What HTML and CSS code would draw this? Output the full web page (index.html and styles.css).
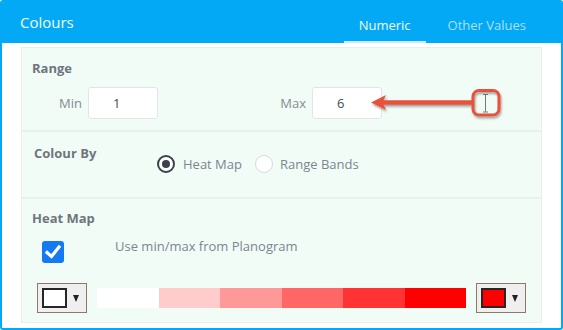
FILE: index.html
```html
<!DOCTYPE html>
<html lang="en">
<head>
    <meta charset="UTF-8">
    <meta name="viewport" content="width=device-width, initial-scale=1.0">
    <title>Colours</title>
    <link rel="stylesheet" href="styles.css">
</head>
<body>

<div class="window">
    <header class="window-head">
        <h1 class="title">Colours</h1>
        <nav class="tabs">
            <span class="tab active">Numeric</span>
            <span class="tab">Other Values</span>
        </nav>
    </header>

    <div class="window-body">
        <div class="panel">
            <section class="group range">
                <h2 class="group-title">Range</h2>
                <div class="range-row">
                    <label class="field">
                        <span class="field-label">Min</span>
                        <input class="field-input" type="text" value="1">
                    </label>
                    <label class="field">
                        <span class="field-label">Max</span>
                        <input class="field-input" type="text" value="6">
                    </label>
                </div>
            </section>

            <section class="group colour-by">
                <h2 class="group-title">Colour By</h2>
                <div class="radios">
                    <span class="radio checked"></span>
                    <span class="radio-text">Heat Map</span>
                    <span class="radio"></span>
                    <span class="radio-text">Range Bands</span>
                </div>
            </section>

            <section class="group heat-map">
                <h2 class="group-title">Heat Map</h2>
                <div class="check-row">
                    <span class="checkbox">
                        <svg width="22" height="22" viewBox="0 0 22 22">
                            <polyline points="5,11.5 9.5,15.5 17,6" fill="none" stroke="#fff" stroke-width="3.2" stroke-linecap="square"/>
                        </svg>
                    </span>
                    <span class="check-text">Use min/max from Planogram</span>
                </div>
                <div class="scale-row">
                    <div class="picker">
                        <span class="swatch" style="background: #ffffff"></span>
                        <span class="caret"></span>
                    </div>
                    <div class="scale">
                        <span style="background: #ffffff"></span>
                        <span style="background: #ffcccc"></span>
                        <span style="background: #ff9999"></span>
                        <span style="background: #ff6666"></span>
                        <span style="background: #ff3333"></span>
                        <span style="background: #ff0000"></span>
                    </div>
                    <div class="picker">
                        <span class="swatch" style="background: #ff0000"></span>
                        <span class="caret"></span>
                    </div>
                </div>
            </section>
        </div>
    </div>

    <!-- annotation pointing at the Max field -->
    <svg class="callout" width="142" height="40" viewBox="0 0 142 40">
        <defs>
            <filter id="shadow" x="-10%" y="-30%" width="130%" height="180%">
                <feDropShadow dx="1" dy="2" stdDeviation="1.2" flood-color="#000" flood-opacity="0.35"/>
            </filter>
        </defs>
        <g filter="url(#shadow)">
            <path d="M8,18.5 L23,11 L20.5,16.3 L109,16.3 L109,20.7 L20.5,20.7 L23,26 Z" fill="#e8513b"/>
            <rect x="110" y="6.5" width="26" height="24.5" rx="6" fill="none" stroke="#e8513b" stroke-width="3"/>
        </g>
        <g stroke="#777" stroke-width="1" fill="none">
            <line x1="122.5" y1="11" x2="122.5" y2="27.5"/>
            <line x1="120" y1="10.5" x2="125" y2="10.5"/>
            <line x1="120" y1="28" x2="125" y2="28"/>
        </g>
    </svg>
</div>

</body>
</html>
```

FILE: styles.css
```css
body {
    margin: 0;
    font-family: "Open Sans", "Noto Sans", sans-serif;
    background-color: #fff;
}
.window {
    position: relative;
    width: 563px;
    height: 330px;
    box-sizing: border-box;
    border: 2px solid #03a9f4;
    border-radius: 3px;
    overflow: hidden;
    background: #fff;
}
.window-head {
    display: flex;
    justify-content: space-between;
    height: 41px;
    background-color: #03a9f4;
}
.title {
    margin: 0;
    padding-left: 18px;
    font-size: 15px;
    font-weight: 400;
    line-height: 41px;
    color: #f2faff;
}
.tabs {
    display: flex;
    gap: 7px;
    padding-right: 20px;
}
.tab {
    display: flex;
    align-items: center;
    padding: 6px 15px 0;
    font-size: 13px;
    color: #a9e1fb;
    border-bottom: 2px solid transparent;
}
.tab.active {
    color: #eef9ff;
    border-bottom-color: #c6ecfd;
}
.window-body {
    padding: 4px 19px 5px;
}
.panel {
    border: 1px solid #e8f0eb;
    background-color: #f2fcf7;
}
.group {
    border-bottom: 2px solid #ebf0ed;
}
.group:last-child {
    border-bottom: none;
}
.group-title {
    margin: 0;
    font-size: 13px;
    font-weight: 700;
    line-height: 18px;
    color: #6e757d;
}
.range {
    padding: 11px 10px 11px;
}
.range-row {
    display: flex;
    gap: 98px;
    margin-top: 10px;
}
.field {
    display: flex;
    align-items: center;
    gap: 6px;
}
.field-label {
    width: 50px;
    text-align: right;
    font-size: 13px;
    color: #858b92;
}
.field-input {
    width: 70px;
    height: 32px;
    box-sizing: border-box;
    padding: 0 0 0 24px;
    border: 1px solid #e3e6e8;
    border-radius: 3px;
    font-family: inherit;
    font-size: 13px;
    color: #454a50;
    background: #fff;
    outline: none;
}
.colour-by {
    display: flex;
    align-items: flex-start;
    padding: 12px 10px 24px 12px;
}
.colour-by .group-title {
    width: 123px;
}
.radios {
    display: flex;
    align-items: center;
    margin-top: 11px;
    height: 18px;
}
.radio {
    position: relative;
    width: 18px;
    height: 18px;
    box-sizing: border-box;
    border: 1px solid #d6dadd;
    border-radius: 50%;
    background: #fff;
}
.radio.checked {
    border: 2.5px solid #3a414b;
}
.radio.checked::after {
    content: "";
    position: absolute;
    left: 2.5px;
    top: 2.5px;
    width: 8px;
    height: 8px;
    border-radius: 50%;
    background: #3a414b;
}
.radio-text {
    margin: 0 13px 0 8px;
    font-size: 13px;
    line-height: 18px;
    color: #7b8591;
}
.radio-text:last-child {
    margin-left: 7px;
}
.heat-map {
    padding: 10px 10px 9px;
}
.check-row {
    display: flex;
    align-items: flex-start;
    margin-top: 10px;
    padding-left: 10px;
}
.checkbox {
    width: 22px;
    height: 22px;
    margin-top: 4px;
    border-radius: 3px;
    background: #1479f2;
}
.checkbox svg {
    display: block;
}
.check-text {
    margin-left: 51px;
    font-size: 13px;
    line-height: 18px;
    color: #7b8591;
}
.scale-row {
    display: flex;
    align-items: center;
    gap: 10px;
    margin-top: 20px;
    padding-left: 5px;
}
.picker {
    display: flex;
    align-items: center;
    width: 50px;
    height: 30px;
    box-sizing: border-box;
    border: 1px solid #8d7a66;
    background: #efefef;
}
.swatch {
    width: 25px;
    height: 20px;
    box-sizing: border-box;
    margin-left: 4px;
    border: 2px solid #262626;
}
.caret {
    width: 0;
    height: 0;
    margin-left: 6px;
    border-left: 3.5px solid transparent;
    border-right: 3.5px solid transparent;
    border-top: 7px solid #222;
}
.scale {
    display: flex;
    width: 369px;
    height: 20px;
}
.scale span {
    flex: 1;
}
.callout {
    position: absolute;
    left: 361px;
    top: 82px;
}
```
